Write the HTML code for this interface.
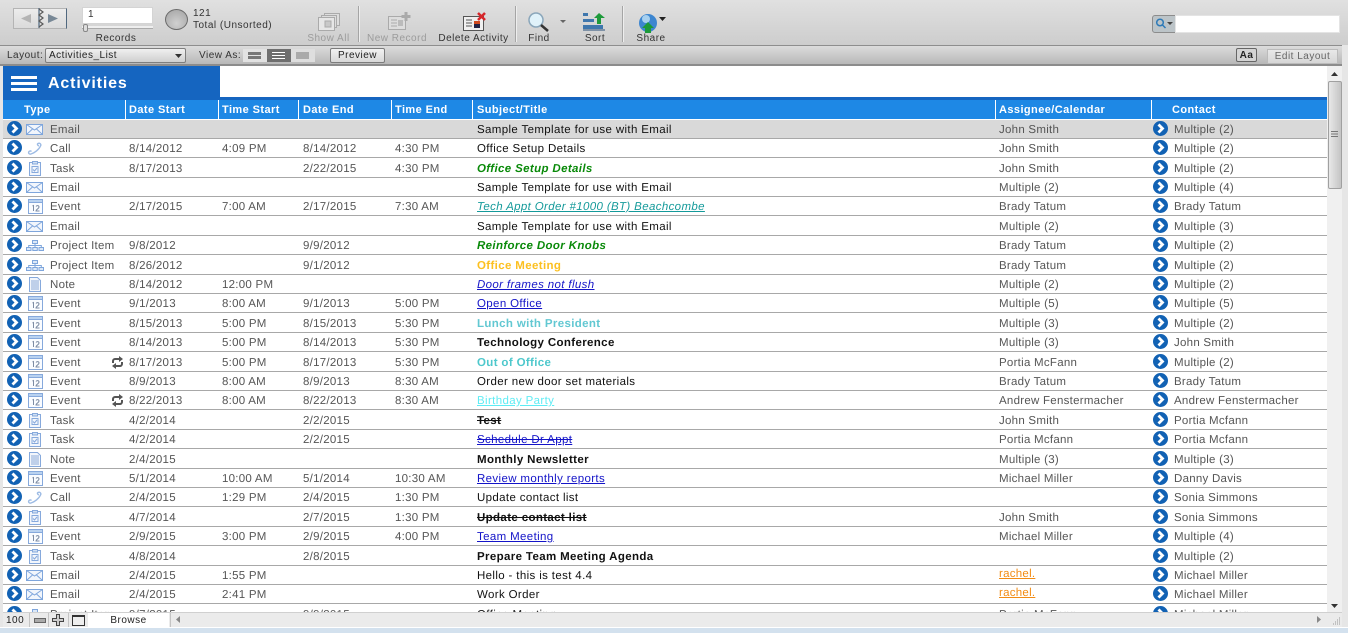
<!DOCTYPE html>
<html><head><meta charset="utf-8"><title>Activities</title>
<style>
html,body{margin:0;padding:0;width:1348px;height:633px;overflow:hidden;background:#e6e6e6}
body{position:relative;font-family:"Liberation Sans",Arial,sans-serif;font-size:11px;color:#333;letter-spacing:.42px;filter:blur(.35px)}
div,span,svg{position:absolute}
.top{left:0;top:0;width:1348px;height:45px;background:linear-gradient(#e0e0e0,#cdcdcd)}
.lay{left:0;top:45px;width:1348px;height:18px;background:linear-gradient(#dcdcdc,#b8b8b8);border-top:1px solid #8e8e8e}
.dk{left:0;top:64px;width:1348px;height:2px;background:#8c8c8c}
.tb{font-size:10px;white-space:nowrap;color:#333;text-align:center;letter-spacing:.5px}
.dis{color:#9c9c9c}
.sep{top:6px;width:1px;height:36px;background:#a5a5a5;border-right:1px solid #eee}
.head{left:3px;top:100px;width:1324px;height:19px;background:#1e88e5;color:#fff;font-weight:bold;font-size:11px}
.head span{top:4px;white-space:nowrap}
.head i{position:absolute;top:0;width:1px;height:19px;background:#fff}
.r{left:3px;width:1324px;height:18px;background:#fff;border-bottom:1.5px solid #a8a8a8;color:#555;white-space:nowrap;font-size:11.5px;letter-spacing:.26px;text-rendering:geometricPrecision}
.r span{top:4px}
.a{left:4px;top:1px;width:15px;height:15px}
.b{left:1150px;top:1px;width:15px;height:15px}
.k{left:22px;top:1px;width:20px;height:16px}
.c0{left:47px}.c1{left:126px}.c2{left:219px}.c3{left:300px}.c4{left:392px}.c5{left:474px;color:#111;letter-spacing:.36px}.c6{left:996px}.c7{left:1171px}
.re{left:108px;top:3px;width:13px;height:13px}
.bd{font-weight:bold}.u{text-decoration:underline}.it{font-style:italic}.st{text-decoration:line-through}
.c5.g{color:#0a8a0a;font-weight:bold;font-style:italic}
.c5.bl{color:#1414c8;text-decoration:underline}
.rach{color:#f28c14;text-decoration:underline;top:2px !important}
</style></head><body>
<svg width="0" height="0" style="left:0;top:0"><defs>
<g id="ar"><circle cx="7.500" cy="7.500" r="7.500" fill="#1262b4"/><path d="M5.500 3.500 9.500 7.500 5.500 11.500" fill="none" stroke="#fff" stroke-width="2.800"/></g>
<g id="em" fill="none" stroke="#7fa6dc"><rect x="1.500" y="3.500" width="16" height="10" fill="#f2f6fc"/><path d="M1.500 3.500 9.500 9l8-5.500M1.500 13.500 7.500 8M17.500 13.500 11.500 8"/></g>
<g id="ca" fill="none" stroke="#9dbbe4" stroke-width="1.400"><path d="M13 3.500c2-1 3.500 1 2.500 2.500C14 9.500 9.500 13 6 14c-2 .5-3-1-2-2.500 1-1 2-.5 2.500 0M13 3.500c-1 .5-.5 2 1 2.500"/></g>
<g id="ta" fill="#f2f6fc" stroke="#86a9dc"><rect x="4.500" y="2.500" width="11" height="13"/><rect x="7.500" y="1.500" width="5" height="2.500" fill="#cfe0f5"/><rect x="7" y="6.500" width="6" height="6"/><path d="M8 9.500l1.500 1.500 2.500-3" fill="none"/></g>
<g id="ev" fill="#fafcff" stroke="#86a9dc"><rect x="3.500" y="1.500" width="14" height="14"/><rect x="3.500" y="1.500" width="14" height="3" fill="#b9d2f0"/><path d="M7.500 8 8.500 7.500V13M11 8.500c1-1.500 3-1 3 .5 0 1.500-3 2.500-3 4h3.500" fill="none" stroke="#7d8ca4"/></g>
<g id="pr" fill="#dbe8f8" stroke="#7fa6dc"><rect x="7.500" y="3.500" width="5" height="3"/><rect x="1.500" y="10.500" width="4.500" height="3"/><rect x="7.800" y="10.500" width="4.500" height="3"/><rect x="14" y="10.500" width="4.500" height="3"/><path d="M10 6.500v4M3.700 10.500V8.500h12.600v2" fill="none"/></g>
<g id="no" fill="#f2f6fc" stroke="#86a9dc"><path d="M4.500 1.500h8l3 3v11h-11z"/><path d="M6 5h8M6 7h8M6 9h8M6 11h8M6 13h8" stroke="#8cabd8"/></g>
<g id="rc" fill="none" stroke="#555" stroke-width="2"><path d="M2 7V5c0-1 1-2 2-2h5M11 6v2c0 1-1 2-2 2H4"/><path d="M8 0 12 3 8 6zM5 7 1 10l4 3z" fill="#555" stroke="none"/></g>
</defs></svg>

<div class="top"></div>
<div class="lay"></div>
<div class="dk"></div>

<!-- book -->
<div style="left:13px;top:8px;width:52px;height:19px;background:linear-gradient(#ececec,#dadada);border:1px solid #b4b4b4;border-right:1px solid #50687f"></div>
<svg style="left:13px;top:7px" width="54" height="22"><path d="M8 11.500 18 7v9z" fill="#b4b4b4"/><path d="M35 7l10 4.500L35 16z" fill="#788896"/><path d="M26 1v20" stroke="#50687f" stroke-width="1.200"/><path d="M26 2 30 5 26 8 30 11 26 14 30 17 26 20" fill="none" stroke="#5a5a5a" stroke-width="1.200"/></svg>
<div style="left:82px;top:7px;width:69px;height:15px;background:#fff;border:1px solid #d4d4d4"><span style="left:5px;top:1px;font-size:10px;color:#333">1</span></div>
<div style="left:82px;top:26px;width:71px;height:2px;background:#eee;border-bottom:1px solid #aaa"></div>
<div style="left:83px;top:24px;width:3px;height:6px;background:#ddd;border:1px solid #888;border-radius:2px"></div>
<span class="tb" style="left:82px;top:33px;width:68px">Records</span>
<div style="left:165px;top:9px;width:21px;height:19px;border-radius:50%;background:radial-gradient(circle at 50% 70%,#d0d0d0,#a2a2a2);border:1px solid #6a6a6a"></div>
<span class="tb" style="left:193px;top:8px">121</span>
<span class="tb" style="left:193px;top:20px">Total (Unsorted)</span>

<!-- toolbar icons -->
<svg style="left:317px;top:12px" width="26" height="20"><g fill="#ddd" stroke="#aaa"><rect x="7.500" y="1.500" width="15" height="12"/><rect x="4.500" y="3.500" width="15" height="12"/><rect x="1.500" y="5.500" width="16" height="13" fill="#e6e6e6"/><rect x="8" y="9" width="6" height="6" fill="#c8c8c8"/></g></svg>
<span class="tb dis" style="left:306px;top:33px;width:45px">Show All</span>
<div class="sep" style="left:358px"></div>
<svg style="left:386px;top:11px" width="26" height="22"><rect x="2.500" y="5.500" width="17" height="13" fill="#ddd" stroke="#aaa"/><path d="M5 9h6M5 12h6M5 15h6" stroke="#aaa"/><rect x="12" y="9" width="5" height="6" fill="#bbb"/><path d="M20 1v9M15.500 5.500h9" stroke="#aaa" stroke-width="3"/></svg>
<span class="tb dis" style="left:366px;top:33px;width:62px">New Record</span>
<svg style="left:462px;top:12px" width="26" height="20"><rect x="1.500" y="4.500" width="20" height="14" fill="#f0f0f0" stroke="#555"/><path d="M4 8h6M4 11h6M4 14h6" stroke="#555"/><rect x="12" y="9" width="6" height="3" fill="#d04a20"/><rect x="12" y="12" width="6" height="4" fill="#224"/><path d="M16 1l7 7M23 1l-7 7" stroke="#d6262a" stroke-width="2.500"/></svg>
<span class="tb" style="left:437px;top:33px;width:73px">Delete Activity</span>
<div class="sep" style="left:515px"></div>
<svg style="left:527px;top:12px" width="24" height="20"><circle cx="9" cy="8" r="7" fill="#e0f2fa" stroke="#8aa6ba" stroke-width="1.500"/><path d="M14 13l7 6" stroke="#333" stroke-width="2.500"/></svg>
<svg style="left:560px;top:20px" width="7" height="4"><path d="M0 0h6L3 3z" fill="#666"/></svg>
<span class="tb" style="left:522px;top:33px;width:34px">Find</span>
<svg style="left:582px;top:12px" width="26" height="20"><path d="M1 1h5v3H1zM1 7h11v3H1zM1 13h20v4H1z" fill="#3f77ad"/><path d="M1 18h22" stroke="#2a4f7a"/><path d="M12 6l5-5 6 5h-4v6h-4V6z" fill="#1d9a3a"/></svg>
<span class="tb" style="left:578px;top:33px;width:34px">Sort</span>
<div class="sep" style="left:622px"></div>
<svg style="left:638px;top:13px" width="28" height="21"><circle cx="10" cy="10" r="9" fill="#3d86d0"/><circle cx="8" cy="6" r="4" fill="#a7d0ef"/><path d="M10 9l6 6h-3v5H7v-5H4z" fill="#1d9a3a"/><path d="M21 4h7l-3.500 4z" fill="#222"/></svg>
<span class="tb" style="left:633px;top:33px;width:36px">Share</span>

<!-- search -->
<div style="left:1152px;top:15px;width:23px;height:16px;background:#bcc4c8;border:1px solid #8c8c8c;border-radius:3px 0 0 3px"></div>
<svg style="left:1155px;top:18px" width="20" height="11"><circle cx="5" cy="4.500" r="3.300" fill="none" stroke="#2d7ab8" stroke-width="1.500"/><path d="M7.500 7l3 3" stroke="#2d7ab8" stroke-width="1.500"/><path d="M12 4h6l-3 3z" fill="#444"/></svg>
<div style="left:1175px;top:15px;width:163px;height:16px;background:#fff;border:1px solid #e4e4e4"></div>

<!-- layout bar -->
<span class="tb" style="left:7px;top:50px">Layout:</span>
<div style="left:45px;top:48px;width:139px;height:13px;background:linear-gradient(#f0f0f0,#cfcfcf);border:1px solid #7e7e7e;border-radius:2px"><span class="tb" style="left:3px;top:1px;color:#222">Activities_List</span></div>
<svg style="left:175px;top:54px" width="7" height="4"><path d="M0 0h7L3.500 4z" fill="#333"/></svg>
<span class="tb" style="left:199px;top:50px">View As:</span>
<div style="left:243px;top:49px;width:24px;height:13px;background:#e2e2e2"></div>
<div style="left:267px;top:49px;width:24px;height:13px;background:#6f6f6f"></div>
<div style="left:291px;top:49px;width:24px;height:13px;background:#dedede"></div>
<svg style="left:248px;top:51px" width="62" height="9"><path d="M0 1h13v3H0zM0 5h13v3H0z" fill="#777"/><path d="M24 1h13v1H24zM24 4h13v1H24zM24 7h13v1H24z" fill="#fff"/><path d="M48 1h13v7H48z" fill="#aaa"/></svg>
<div class="tb" style="left:330px;top:48px;width:53px;height:13px;background:linear-gradient(#f2f2f2,#d8d8d8);border:1px solid #7c7c7c;border-radius:2px;line-height:14px;color:#222">Preview</div>
<div class="tb" style="left:1236px;top:48px;width:19px;height:12px;background:#d4d4d4;border:1px solid #666;border-radius:2px;line-height:13px;font-weight:bold;color:#222">Aa</div>
<div class="tb" style="left:1267px;top:49px;width:69px;height:13px;background:linear-gradient(#e8e8e8,#d6d6d6);border:1px solid #bbb;line-height:13px;color:#666">Edit Layout</div>

<!-- left edge + content -->
<div style="left:3px;top:66px;width:1324px;height:546px;background:#fff"></div>
<div style="left:3px;top:66px;width:217px;height:34px;background:#1565c0"></div>
<div style="left:220px;top:97px;width:1107px;height:3px;background:#1565c0"></div>
<div style="left:11px;top:76px;width:26px;height:3px;background:#fff"></div>
<div style="left:11px;top:82px;width:26px;height:3px;background:#fff"></div>
<div style="left:11px;top:88px;width:26px;height:3px;background:#fff"></div>
<span style="left:48px;top:75px;color:#fff;font-weight:bold;font-size:16px;letter-spacing:.85px;white-space:nowrap">Activities</span>

<div class="head">
<span style="left:21px">Type</span><i style="left:122px"></i>
<span style="left:126px">Date Start</span><i style="left:215px"></i>
<span style="left:219px">Time Start</span><i style="left:295px"></i>
<span style="left:300px">Date End</span><i style="left:388px"></i>
<span style="left:392px">Time End</span><i style="left:469px"></i>
<span style="left:474px">Subject/Title</span><i style="left:992px"></i>
<span style="left:996px">Assignee/Calendar</span><i style="left:1148px"></i>
<span style="left:1169px">Contact</span>
</div>

<div class="r" style="top:120px;background:#d9d9d9"><svg class="a"><use href="#ar"/></svg><svg class="k"><use href="#em"/></svg><span class="c0">Email</span><span class="c5">Sample Template for use with Email</span><span class="c6">John Smith</span><svg class="b"><use href="#ar"/></svg><span class="c7">Multiple (2)</span></div>
<div class="r" style="top:139px"><svg class="a"><use href="#ar"/></svg><svg class="k"><use href="#ca"/></svg><span class="c0">Call</span><span class="c1">8/14/2012</span><span class="c2">4:09 PM</span><span class="c3">8/14/2012</span><span class="c4">4:30 PM</span><span class="c5">Office Setup Details</span><span class="c6">John Smith</span><svg class="b"><use href="#ar"/></svg><span class="c7">Multiple (2)</span></div>
<div class="r" style="top:159px"><svg class="a"><use href="#ar"/></svg><svg class="k"><use href="#ta"/></svg><span class="c0">Task</span><span class="c1">8/17/2013</span><span class="c3">2/22/2015</span><span class="c4">4:30 PM</span><span class="c5 g">Office Setup Details</span><span class="c6">John Smith</span><svg class="b"><use href="#ar"/></svg><span class="c7">Multiple (2)</span></div>
<div class="r" style="top:178px"><svg class="a"><use href="#ar"/></svg><svg class="k"><use href="#em"/></svg><span class="c0">Email</span><span class="c5">Sample Template for use with Email</span><span class="c6">Multiple (2)</span><svg class="b"><use href="#ar"/></svg><span class="c7">Multiple (4)</span></div>
<div class="r" style="top:197px"><svg class="a"><use href="#ar"/></svg><svg class="k"><use href="#ev"/></svg><span class="c0">Event</span><span class="c1">2/17/2015</span><span class="c2">7:00 AM</span><span class="c3">2/17/2015</span><span class="c4">7:30 AM</span><span class="c5 u it" style="color:#149a9a">Tech Appt Order #1000 (BT) Beachcombe</span><span class="c6">Brady Tatum</span><svg class="b"><use href="#ar"/></svg><span class="c7">Brady Tatum</span></div>
<div class="r" style="top:217px"><svg class="a"><use href="#ar"/></svg><svg class="k"><use href="#em"/></svg><span class="c0">Email</span><span class="c5">Sample Template for use with Email</span><span class="c6">Multiple (2)</span><svg class="b"><use href="#ar"/></svg><span class="c7">Multiple (3)</span></div>
<div class="r" style="top:236px"><svg class="a"><use href="#ar"/></svg><svg class="k"><use href="#pr"/></svg><span class="c0">Project Item</span><span class="c1">9/8/2012</span><span class="c3">9/9/2012</span><span class="c5 g">Reinforce Door Knobs</span><span class="c6">Brady Tatum</span><svg class="b"><use href="#ar"/></svg><span class="c7">Multiple (2)</span></div>
<div class="r" style="top:256px"><svg class="a"><use href="#ar"/></svg><svg class="k"><use href="#pr"/></svg><span class="c0">Project Item</span><span class="c1">8/26/2012</span><span class="c3">9/1/2012</span><span class="c5 bd" style="color:#fcc020">Office Meeting</span><span class="c6">Brady Tatum</span><svg class="b"><use href="#ar"/></svg><span class="c7">Multiple (2)</span></div>
<div class="r" style="top:275px"><svg class="a"><use href="#ar"/></svg><svg class="k"><use href="#no"/></svg><span class="c0">Note</span><span class="c1">8/14/2012</span><span class="c2">12:00 PM</span><span class="c5 bl it">Door frames not flush</span><span class="c6">Multiple (2)</span><svg class="b"><use href="#ar"/></svg><span class="c7">Multiple (2)</span></div>
<div class="r" style="top:294px"><svg class="a"><use href="#ar"/></svg><svg class="k"><use href="#ev"/></svg><span class="c0">Event</span><span class="c1">9/1/2013</span><span class="c2">8:00 AM</span><span class="c3">9/1/2013</span><span class="c4">5:00 PM</span><span class="c5 bl">Open Office</span><span class="c6">Multiple (5)</span><svg class="b"><use href="#ar"/></svg><span class="c7">Multiple (5)</span></div>
<div class="r" style="top:314px"><svg class="a"><use href="#ar"/></svg><svg class="k"><use href="#ev"/></svg><span class="c0">Event</span><span class="c1">8/15/2013</span><span class="c2">5:00 PM</span><span class="c3">8/15/2013</span><span class="c4">5:30 PM</span><span class="c5 bd" style="color:#62c8d2">Lunch with President</span><span class="c6">Multiple (3)</span><svg class="b"><use href="#ar"/></svg><span class="c7">Multiple (2)</span></div>
<div class="r" style="top:333px"><svg class="a"><use href="#ar"/></svg><svg class="k"><use href="#ev"/></svg><span class="c0">Event</span><span class="c1">8/14/2013</span><span class="c2">5:00 PM</span><span class="c3">8/14/2013</span><span class="c4">5:30 PM</span><span class="c5 bd">Technology Conference</span><span class="c6">Multiple (3)</span><svg class="b"><use href="#ar"/></svg><span class="c7">John Smith</span></div>
<div class="r" style="top:353px"><svg class="a"><use href="#ar"/></svg><svg class="k"><use href="#ev"/></svg><span class="c0">Event</span><svg class="re"><use href="#rc"/></svg><span class="c1">8/17/2013</span><span class="c2">5:00 PM</span><span class="c3">8/17/2013</span><span class="c4">5:30 PM</span><span class="c5 bd" style="color:#4ec8cc">Out of Office</span><span class="c6">Portia McFann</span><svg class="b"><use href="#ar"/></svg><span class="c7">Multiple (2)</span></div>
<div class="r" style="top:372px"><svg class="a"><use href="#ar"/></svg><svg class="k"><use href="#ev"/></svg><span class="c0">Event</span><span class="c1">8/9/2013</span><span class="c2">8:00 AM</span><span class="c3">8/9/2013</span><span class="c4">8:30 AM</span><span class="c5">Order new door set materials</span><span class="c6">Brady Tatum</span><svg class="b"><use href="#ar"/></svg><span class="c7">Brady Tatum</span></div>
<div class="r" style="top:391px"><svg class="a"><use href="#ar"/></svg><svg class="k"><use href="#ev"/></svg><span class="c0">Event</span><svg class="re"><use href="#rc"/></svg><span class="c1">8/22/2013</span><span class="c2">8:00 AM</span><span class="c3">8/22/2013</span><span class="c4">8:30 AM</span><span class="c5 u" style="color:#5eecf4">Birthday Party</span><span class="c6">Andrew Fenstermacher</span><svg class="b"><use href="#ar"/></svg><span class="c7">Andrew Fenstermacher</span></div>
<div class="r" style="top:411px"><svg class="a"><use href="#ar"/></svg><svg class="k"><use href="#ta"/></svg><span class="c0">Task</span><span class="c1">4/2/2014</span><span class="c3">2/2/2015</span><span class="c5 bd st">Test</span><span class="c6">John Smith</span><svg class="b"><use href="#ar"/></svg><span class="c7">Portia Mcfann</span></div>
<div class="r" style="top:430px"><svg class="a"><use href="#ar"/></svg><svg class="k"><use href="#ta"/></svg><span class="c0">Task</span><span class="c1">4/2/2014</span><span class="c3">2/2/2015</span><span class="c5" style="color:#1414c8;text-decoration:underline line-through">Schedule Dr Appt</span><span class="c6">Portia Mcfann</span><svg class="b"><use href="#ar"/></svg><span class="c7">Portia Mcfann</span></div>
<div class="r" style="top:450px"><svg class="a"><use href="#ar"/></svg><svg class="k"><use href="#no"/></svg><span class="c0">Note</span><span class="c1">2/4/2015</span><span class="c5 bd">Monthly Newsletter</span><span class="c6">Multiple (3)</span><svg class="b"><use href="#ar"/></svg><span class="c7">Multiple (3)</span></div>
<div class="r" style="top:469px"><svg class="a"><use href="#ar"/></svg><svg class="k"><use href="#ev"/></svg><span class="c0">Event</span><span class="c1">5/1/2014</span><span class="c2">10:00 AM</span><span class="c3">5/1/2014</span><span class="c4">10:30 AM</span><span class="c5 bl">Review monthly reports</span><span class="c6">Michael Miller</span><svg class="b"><use href="#ar"/></svg><span class="c7">Danny Davis</span></div>
<div class="r" style="top:488px"><svg class="a"><use href="#ar"/></svg><svg class="k"><use href="#ca"/></svg><span class="c0">Call</span><span class="c1">2/4/2015</span><span class="c2">1:29 PM</span><span class="c3">2/4/2015</span><span class="c4">1:30 PM</span><span class="c5">Update contact list</span><svg class="b"><use href="#ar"/></svg><span class="c7">Sonia Simmons</span></div>
<div class="r" style="top:508px"><svg class="a"><use href="#ar"/></svg><svg class="k"><use href="#ta"/></svg><span class="c0">Task</span><span class="c1">4/7/2014</span><span class="c3">2/7/2015</span><span class="c4">1:30 PM</span><span class="c5 bd st">Update contact list</span><span class="c6">John Smith</span><svg class="b"><use href="#ar"/></svg><span class="c7">Sonia Simmons</span></div>
<div class="r" style="top:527px"><svg class="a"><use href="#ar"/></svg><svg class="k"><use href="#ev"/></svg><span class="c0">Event</span><span class="c1">2/9/2015</span><span class="c2">3:00 PM</span><span class="c3">2/9/2015</span><span class="c4">4:00 PM</span><span class="c5 bl">Team Meeting</span><span class="c6">Michael Miller</span><svg class="b"><use href="#ar"/></svg><span class="c7">Multiple (4)</span></div>
<div class="r" style="top:547px"><svg class="a"><use href="#ar"/></svg><svg class="k"><use href="#ta"/></svg><span class="c0">Task</span><span class="c1">4/8/2014</span><span class="c3">2/8/2015</span><span class="c5 bd">Prepare Team Meeting Agenda</span><svg class="b"><use href="#ar"/></svg><span class="c7">Multiple (2)</span></div>
<div class="r" style="top:566px"><svg class="a"><use href="#ar"/></svg><svg class="k"><use href="#em"/></svg><span class="c0">Email</span><span class="c1">2/4/2015</span><span class="c2">1:55 PM</span><span class="c5">Hello - this is test 4.4</span><span class="c6 rach">rachel.</span><svg class="b"><use href="#ar"/></svg><span class="c7">Michael Miller</span></div>
<div class="r" style="top:585px"><svg class="a"><use href="#ar"/></svg><svg class="k"><use href="#em"/></svg><span class="c0">Email</span><span class="c1">2/4/2015</span><span class="c2">2:41 PM</span><span class="c5">Work Order</span><span class="c6 rach">rachel.</span><svg class="b"><use href="#ar"/></svg><span class="c7">Michael Miller</span></div>
<div class="r" style="top:605px"><svg class="a"><use href="#ar"/></svg><svg class="k"><use href="#pr"/></svg><span class="c0">Project Item</span><span class="c1">9/7/2015</span><span class="c3">9/9/2015</span><span class="c5">Office Meeting</span><span class="c6">Portia McFann</span><svg class="b"><use href="#ar"/></svg><span class="c7">Michael Miller</span></div>

<!-- scrollbar -->
<div style="left:1327px;top:66px;width:15px;height:546px;background:#f0f0f0"></div>
<svg style="left:1331px;top:72px" width="8" height="5"><path d="M0 4 3.500 0 7 4z" fill="#333"/></svg>
<div style="left:1328px;top:81px;width:12px;height:106px;background:linear-gradient(90deg,#e8e8e8,#c4c4c4);border:1px solid #a0a0a0;border-radius:2px"></div>
<svg style="left:1330px;top:131px" width="9" height="7"><path d="M1 .5h7M1 3h7M1 5.500h7" stroke="#777"/></svg>
<svg style="left:1331px;top:604px" width="8" height="5"><path d="M0 0h7L3.500 4z" fill="#333"/></svg>

<!-- status bar -->
<div style="left:3px;top:612px;width:1339px;height:15px;background:#ebebeb;border-top:1px solid #d0d0d0"></div>
<span class="tb" style="left:6px;top:615px;color:#222">100</span>
<div style="left:29px;top:613px;width:1px;height:14px;background:#c4c4c4"></div>
<div style="left:48px;top:613px;width:1px;height:14px;background:#c4c4c4"></div>
<div style="left:68px;top:613px;width:1px;height:14px;background:#c4c4c4"></div>
<div style="left:34px;top:618px;width:10px;height:3px;background:#aaa;border:1px solid #666"></div>
<svg style="left:52px;top:614px" width="12" height="12"><path d="M4.500.5h3v4h4v3h-4v4h-3v-4h-4v-3h4z" fill="#ccc" stroke="#444"/></svg>
<div style="left:72px;top:615px;width:11px;height:8px;background:#eee;border:1px solid #333;border-top-width:2px"></div>
<div style="left:88px;top:613px;width:81px;height:14px;background:#fff"></div>
<span class="tb" style="left:88px;top:615px;width:81px;color:#222">Browse</span>
<div style="left:170px;top:613px;width:1px;height:14px;background:#c4c4c4"></div>
<svg style="left:176px;top:616px" width="6" height="8"><path d="M4 0v7L0 3.500z" fill="#888"/></svg>
<svg style="left:1316px;top:616px" width="6" height="8"><path d="M1 0v7l4-3.500z" fill="#888"/></svg>
<svg style="left:1332px;top:617px" width="9" height="9"><path d="M7 1h1M5 3h1M7 3h1M3 5h1M5 5h1M7 5h1M1 7h1M3 7h1M5 7h1M7 7h1" stroke="#999"/></svg>

<div style="left:0;top:66px;width:3px;height:567px;background:#e6e6e6"></div>
<div style="left:1342px;top:45px;width:6px;height:588px;background:#e6e6e6"></div>
<div style="left:0;top:627px;width:1348px;height:6px;background:#d3e1ee;border-top:1px solid #fff"></div>
</body></html>
